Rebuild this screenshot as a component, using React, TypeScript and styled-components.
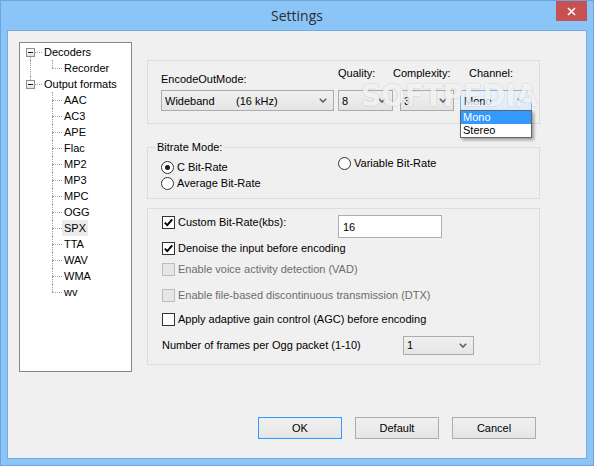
import React from 'react';
import styled, { createGlobalStyle } from 'styled-components';

const GlobalStyle = createGlobalStyle`
  html, body { margin: 0; padding: 0; }
  body {
    background: #8bc4f7;
    font-family: "Liberation Sans", Arial, sans-serif;
    font-size: 11px;
    color: #000;
  }
  * { box-sizing: border-box; }
`;

const Window = styled.div`
  width: 594px;
  height: 466px;
  display: flex;
  flex-direction: column;
  background: #8bc4f7;
  border: 1px solid #6ba5de;
  padding: 0 6px 6px;
`;

const TitleBar = styled.header`
  height: 29px;
  flex-shrink: 0;
  display: grid;
  grid-template-columns: 1fr auto 1fr;
  align-items: start;
`;

const Title = styled.h1`
  grid-column: 2;
  margin: 0;
  padding-top: 5px;
  font: 400 14px/20px "Open Sans", "Noto Sans", sans-serif;
  color: #2e2e2e;
`;

const CloseButton = styled.button`
  grid-column: 3;
  justify-self: end;
  width: 31px;
  height: 20px;
  border: 0;
  padding: 0;
  background: #c75050;
  display: flex;
  align-items: center;
  justify-content: center;
`;

const Client = styled.main`
  flex: 1;
  display: flex;
  flex-direction: column;
  background: #f0f0f0;
  border: 1px solid #74abe2;
  padding: 11px 0 0 11px;
`;

const TopRow = styled.div`
  display: flex;
  align-items: flex-start;
`;

/* ---------- Tree ---------- */
const TreeBox = styled.div`
  width: 113px;
  height: 330px;
  flex-shrink: 0;
  margin-right: 15px;
  background: #fff;
  border: 1px solid #828790;
  padding-top: 1px;
`;

const TreeRow = styled.div`
  display: flex;
  height: 16px;
  align-items: center;
`;

type VLine = 'none' | 'full' | 'top' | 'bottom';

const Guide = styled.span<{ $w: number; $x: number; $v: VLine; $h: number }>`
  position: relative;
  flex-shrink: 0;
  width: ${p => p.$w}px;
  height: 16px;
  &::before {
    content: '';
    position: absolute;
    left: ${p => p.$x}px;
    top: ${p => (p.$v === 'bottom' ? '8px' : '0')};
    bottom: ${p => (p.$v === 'top' ? '8px' : '0')};
    border-left: ${p => (p.$v === 'none' ? '0' : '1px dotted #a0a0a0')};
  }
  &::after {
    content: '';
    position: absolute;
    top: 8px;
    left: ${p => p.$x}px;
    width: ${p => p.$h}px;
    border-top: ${p => (p.$h ? '1px dotted #a0a0a0' : '0')};
  }
`;

const ExpandBox = styled.span`
  position: absolute;
  z-index: 1;
  left: 6px;
  top: 4px;
  width: 9px;
  height: 9px;
  border: 1px solid #8e8f8f;
  background: linear-gradient(#ffffff, #e4e4e4);
  display: flex;
  align-items: center;
  justify-content: center;
  &::after {
    content: '';
    width: 5px;
    height: 1px;
    background: #1c1c1c;
  }
`;

const TreeLabel = styled.span<{ $selected?: boolean }>`
  padding: 0 2px;
  height: 16px;
  line-height: 16px;
  white-space: nowrap;
  background: ${p => (p.$selected ? '#ebebeb' : 'transparent')};
`;

/* ---------- Right panel ---------- */
const Panel = styled.section`
  position: relative;
  width: 393px;
  margin-top: 18px;
  display: flex;
  flex-direction: column;
`;

const Group = styled.div<{ $h?: number }>`
  border: 1px solid #dcdcdc;
  ${p => (p.$h ? `height: ${p.$h}px;` : '')}
`;

const ModeGroup = styled(Group)`
  padding: 6px 0 0 13px;
`;

const FieldsRow = styled.div`
  display: flex;
  align-items: flex-end;
`;

const Field = styled.div<{ $ml?: number }>`
  position: relative;
  display: flex;
  flex-direction: column;
  margin-left: ${p => p.$ml ?? 0}px;
`;

const FieldLabel = styled.span<{ $gap: number; $shift?: number }>`
  line-height: 13px;
  white-space: nowrap;
  margin-bottom: ${p => p.$gap}px;
  margin-left: ${p => p.$shift ?? 0}px;
`;

const SelectBox = styled.div<{ $w: number; $h?: number; $focused?: boolean }>`
  width: ${p => p.$w}px;
  height: ${p => p.$h ?? 21}px;
  display: flex;
  align-items: center;
  padding: 0 6px 0 3px;
  border: 1px solid ${p => (p.$focused ? '#7eb4ea' : '#acacac')};
  background: ${p =>
    p.$focused ? 'linear-gradient(#ecf4fc, #dcecfc)' : 'linear-gradient(#f0f0f0, #e5e5e5)'};
`;

const SelectValue = styled.span`
  flex: 1;
  display: flex;
  white-space: nowrap;
`;

const ValuePart = styled.span<{ $w?: number }>`
  ${p => (p.$w ? `width: ${p.$w}px;` : '')}
`;

const DropList = styled.ul`
  position: absolute;
  z-index: 3;
  left: 0;
  top: 100%;
  margin: -1px 0 0;
  padding: 0;
  width: 72px;
  list-style: none;
  background: #fff;
  border: 1px solid #646464;
  box-shadow: 2px 2px 3px rgba(0, 0, 0, 0.35);
`;

const DropItem = styled.li<{ $active?: boolean }>`
  height: 13px;
  line-height: 13px;
  padding-left: 2px;
  background: ${p => (p.$active ? '#3399ff' : 'transparent')};
  color: ${p => (p.$active ? '#fff' : '#000')};
`;

const Watermark = styled.div`
  position: absolute;
  z-index: 2;
  left: 214px;
  top: 24px;
  pointer-events: none;
  font: 700 31px/22px "Liberation Sans Narrow", "DejaVu Sans Condensed", sans-serif;
  color: rgba(255, 255, 255, 0.78);
  text-shadow: 0 0 2px rgba(0, 0, 0, 0.2);
  white-space: nowrap;
`;

const Fieldset = styled.fieldset`
  margin: 17px 0 0;
  padding: 0;
  min-width: 0;
  border: 1px solid #dcdcdc;
`;

const Legend = styled.legend`
  margin-left: 7px;
  padding: 0 2px;
  line-height: 13px;
  font-size: 11px;
`;

const RadioGrid = styled.div`
  display: grid;
  grid-template-columns: 177px 1fr;
  grid-auto-rows: 16px;
  padding: 5px 0 7px 13px;
`;

const RadioItem = styled.label<{ $raise?: number }>`
  display: flex;
  align-items: center;
  gap: 3px;
  height: 16px;
  margin-top: ${p => -(p.$raise ?? 0)}px;
  white-space: nowrap;
`;

const RadioCircle = styled.span<{ $checked?: boolean }>`
  width: 13px;
  height: 13px;
  flex-shrink: 0;
  border-radius: 50%;
  border: 1px solid #333;
  background: #fff;
  display: flex;
  align-items: center;
  justify-content: center;
  &::after {
    content: '';
    width: 5px;
    height: 5px;
    border-radius: 50%;
    background: ${p => (p.$checked ? '#1b1b1b' : 'transparent')};
  }
`;

const OptionsGroup = styled(Group)`
  margin-top: 9px;
  padding: 0 0 10px 14px;
`;

const OptRow = styled.div<{ $mt: number }>`
  display: flex;
  align-items: center;
  height: 18px;
  margin-top: ${p => p.$mt}px;
`;

const OptLabel = styled.span<{ $w?: number; $disabled?: boolean }>`
  display: flex;
  align-items: center;
  gap: 3px;
  white-space: nowrap;
  ${p => (p.$w ? `width: ${p.$w}px;` : '')}
  color: ${p => (p.$disabled ? '#6d6d6d' : '#000')};
`;

const CheckBoxSquare = styled.span<{ $disabled?: boolean }>`
  width: 13px;
  height: 13px;
  flex-shrink: 0;
  display: flex;
  align-items: center;
  justify-content: center;
  border: 1px solid ${p => (p.$disabled ? '#bcbcbc' : '#333')};
  background: ${p => (p.$disabled ? '#e6e6e6' : '#fff')};
`;

const TextInput = styled.div`
  width: 104px;
  height: 23px;
  margin-top: 9px;
  border: 1px solid #abadb3;
  background: #fff;
  padding-left: 4px;
  display: flex;
  align-items: center;
`;

const ButtonRow = styled.div`
  margin-top: auto;
  display: flex;
  justify-content: flex-end;
  gap: 13px;
  padding: 0 50px 19px 0;
`;

const Button = styled.button<{ $default?: boolean }>`
  width: 84px;
  height: 22px;
  padding: 0;
  font: 11px "Liberation Sans", Arial, sans-serif;
  color: #000;
  border: 1px solid ${p => (p.$default ? '#3399ff' : '#acacac')};
  background: linear-gradient(#f0f0f0, #e5e5e5);
`;

const Chevron = () => (
  <svg width="8" height="5" viewBox="0 0 8 5">
    <path d="M0.8 0.8 L4 4 L7.2 0.8" fill="none" stroke="#606060" strokeWidth="1.6" />
  </svg>
);

const CheckMark = () => (
  <svg width="11" height="11" viewBox="0 0 11 11">
    <path d="M1.8 5.6 L4.3 8.2 L9.2 2.4" fill="none" stroke="#000" strokeWidth="1.9" />
  </svg>
);

const Checkbox = ({ checked, disabled }: { checked?: boolean; disabled?: boolean }) => (
  <CheckBoxSquare $disabled={disabled}>{checked && <CheckMark />}</CheckBoxSquare>
);

const tree = [
  { label: 'Decoders', children: ['Recorder'] },
  {
    label: 'Output formats',
    children: ['AAC', 'AC3', 'APE', 'Flac', 'MP2', 'MP3', 'MPC', 'OGG', 'SPX', 'TTA', 'WAV', 'WMA', 'wv'],
  },
];

const Tree = () => (
  <TreeBox>
    {tree.map((node, i) => {
      const lastRoot = i === tree.length - 1;
      const rootV: VLine = i === 0 ? 'bottom' : lastRoot ? 'top' : 'full';
      return (
        <React.Fragment key={node.label}>
          <TreeRow>
            <Guide $w={22} $x={10} $v={rootV} $h={12}>
              <ExpandBox />
            </Guide>
            <TreeLabel>{node.label}</TreeLabel>
          </TreeRow>
          {node.children.map((c, j) => (
            <TreeRow key={c}>
              <Guide $w={22} $x={10} $v={lastRoot ? 'none' : 'full'} $h={0} />
              <Guide
                $w={20}
                $x={10}
                $v={j === node.children.length - 1 ? 'top' : 'full'}
                $h={10}
              />
              <TreeLabel $selected={c === 'SPX'}>{c}</TreeLabel>
            </TreeRow>
          ))}
        </React.Fragment>
      );
    })}
  </TreeBox>
);

export default function App() {
  return (
    <>
      <GlobalStyle />
      <Window>
        <TitleBar>
          <Title>Settings</Title>
          <CloseButton aria-label="Close">
            <svg width="9" height="9" viewBox="0 0 9 9">
              <path d="M1 1 L8 8 M8 1 L1 8" stroke="#fff" strokeWidth="1.7" />
            </svg>
          </CloseButton>
        </TitleBar>
        <Client>
          <TopRow>
            <Tree />
            <Panel>
              <ModeGroup $h={64}>
                <FieldsRow>
                  <Field>
                    <FieldLabel $gap={4}>EncodeOutMode:</FieldLabel>
                    <SelectBox $w={173}>
                      <SelectValue>
                        <ValuePart $w={71}>Wideband</ValuePart>
                        <ValuePart>(16 kHz)</ValuePart>
                      </SelectValue>
                      <Chevron />
                    </SelectBox>
                  </Field>
                  <Field $ml={4}>
                    <FieldLabel $gap={10}>Quality:</FieldLabel>
                    <SelectBox $w={55}>
                      <SelectValue>8</SelectValue>
                      <Chevron />
                    </SelectBox>
                  </Field>
                  <Field $ml={7}>
                    <FieldLabel $gap={10} $shift={-7}>Complexity:</FieldLabel>
                    <SelectBox $w={54}>
                      <SelectValue>3</SelectValue>
                      <Chevron />
                    </SelectBox>
                  </Field>
                  <Field $ml={6}>
                    <FieldLabel $gap={10} $shift={9}>Channel:</FieldLabel>
                    <SelectBox $w={72} $focused>
                      <SelectValue>Mono</SelectValue>
                      <Chevron />
                    </SelectBox>
                    <DropList>
                      <DropItem $active>Mono</DropItem>
                      <DropItem>Stereo</DropItem>
                    </DropList>
                  </Field>
                </FieldsRow>
              </ModeGroup>
              <Watermark>SOFTPEDIA</Watermark>

              <Fieldset>
                <Legend>Bitrate Mode:</Legend>
                <RadioGrid>
                  <RadioItem>
                    <RadioCircle $checked />C Bit-Rate
                  </RadioItem>
                  <RadioItem $raise={4}>
                    <RadioCircle />Variable Bit-Rate
                  </RadioItem>
                  <RadioItem>
                    <RadioCircle />Average Bit-Rate
                  </RadioItem>
                </RadioGrid>
              </Fieldset>

              <OptionsGroup>
                <OptRow $mt={4}>
                  <OptLabel $w={176}>
                    <Checkbox checked />Custom Bit-Rate(kbs):
                  </OptLabel>
                  <TextInput>16</TextInput>
                </OptRow>
                <OptRow $mt={8}>
                  <OptLabel>
                    <Checkbox checked />Denoise the input before encoding
                  </OptLabel>
                </OptRow>
                <OptRow $mt={3}>
                  <OptLabel $disabled>
                    <Checkbox disabled />Enable voice activity detection (VAD)
                  </OptLabel>
                </OptRow>
                <OptRow $mt={8}>
                  <OptLabel $disabled>
                    <Checkbox disabled />Enable file-based discontinuous transmission (DTX)
                  </OptLabel>
                </OptRow>
                <OptRow $mt={6}>
                  <OptLabel>
                    <Checkbox />Apply adaptive gain control (AGC) before encoding
                  </OptLabel>
                </OptRow>
                <OptRow $mt={8}>
                  <OptLabel $w={241}>Number of frames per Ogg packet (1-10)</OptLabel>
                  <SelectBox $w={71} $h={19}>
                    <SelectValue>1</SelectValue>
                    <Chevron />
                  </SelectBox>
                </OptRow>
              </OptionsGroup>
            </Panel>
          </TopRow>
          <ButtonRow>
            <Button $default>OK</Button>
            <Button>Default</Button>
            <Button>Cancel</Button>
          </ButtonRow>
        </Client>
      </Window>
    </>
  );
}
